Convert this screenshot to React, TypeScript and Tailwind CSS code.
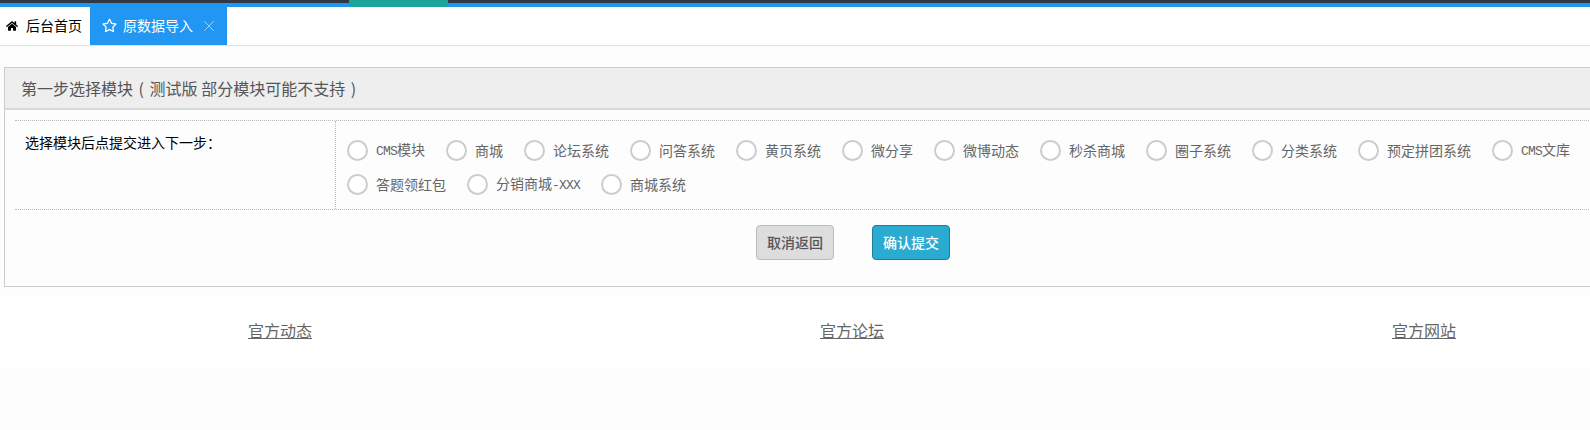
import React from "react";
import { FaHome, FaRegStar } from "react-icons/fa";
import { X } from "lucide-react";

const modules = [
  "CMS模块",
  "商城",
  "论坛系统",
  "问答系统",
  "黄页系统",
  "微分享",
  "微博动态",
  "秒杀商城",
  "圈子系统",
  "分类系统",
  "预定拼团系统",
  "CMS文库",
  "答题领红包",
  "分销商城-XXX",
  "商城系统",
];

const links = ["官方动态", "官方论坛", "官方网站"];

// latin runs are half-width in the original bitmap font
function ModuleLabel({ text }: { text: string }) {
  return (
    <span className="text-[14px] leading-[21px] text-[#666]">
      {text.split(/([A-Za-z-]+)/).map((part, i) =>
        /^[A-Za-z-]+$/.test(part) ? (
          <span key={i} className="font-['Liberation_Mono',monospace] text-[13px] tracking-[-0.8px]">
            {part}
          </span>
        ) : (
          <span key={i}>{part}</span>
        )
      )}
    </span>
  );
}

export default function App() {
  return (
    <div className="h-[430px] w-full overflow-hidden bg-[#fdfdfd] font-['Noto_Sans_CJK_SC','Liberation_Sans',sans-serif]">
      {/* Top bar */}
      <div className="relative h-[7px] bg-[#2196f3]">
        <div className="h-[3px] bg-[#2f3a45]" />
        <div className="absolute left-[349px] top-0 h-[7px] w-[99px] bg-[#1ba39c]" />
      </div>

      {/* Tabs */}
      <div className="flex h-[39px] border-b border-[#e0e0e0] bg-white">
        <div className="flex h-[38px] w-[90px] items-center pb-px pl-[6px] text-[14px] text-black">
          <FaHome className="mr-[8px] h-[12px] w-[12px]" />
          后台首页
        </div>
        <div className="flex h-[38px] w-[137px] items-center bg-[#2196f3] pb-px pl-[12px] text-[14px] text-white">
          <FaRegStar className="mr-[6px] h-[15px] w-[15px]" />
          原数据导入
          <X className="ml-[7px] h-[18px] w-[18px] text-[#a9d3f5]" strokeWidth={1.25} />
        </div>
      </div>

      {/* Panel */}
      <div className="ml-1 mt-[21px] w-[1697px] border border-[#ccc]">
        <div className="flex h-[42px] items-center whitespace-pre border-b-2 border-[#d8d8d8] bg-[#eee] pl-4 text-[16px] text-[#555]">
          第一步选择模块 <span className="mx-[2px]">(</span> 测试版 部分模块可能不支持 <span className="mx-[2px]">)</span>
        </div>
        <div className="pl-[10px] pr-[9px] pt-[10px]">
          <div className="flex h-[90px] border-y border-dotted border-[#bbb]">
            <div className="w-[321px] border-r border-dotted border-[#bbb] pl-[10px] pt-[11px] text-[14px] leading-[21px] text-black">
              选择模块后点提交进入下一步：
            </div>
            <div className="flex flex-1 flex-wrap content-start gap-x-[21px] gap-y-[13px] pl-[11px] pr-[40px] pt-[19px]">
              {modules.map((name) => (
                <label key={name} className="flex h-[21px] items-center gap-2">
                  <span className="h-[21px] w-[21px] rounded-full border-2 border-[#ccc] bg-white" />
                  <ModuleLabel text={name} />
                </label>
              ))}
            </div>
          </div>
          <div className="flex h-[76px] justify-center gap-[38px] pt-[15px]">
            <button className="h-[35px] w-[78px] rounded border border-[#bbb] bg-[#ddd] text-[14px] font-medium text-[#555]">
              取消返回
            </button>
            <button className="h-[35px] w-[78px] rounded border border-[#1b80a0] bg-[#2aabd2] text-[14px] font-medium text-white">
              确认提交
            </button>
          </div>
        </div>
      </div>

      {/* Footer links */}
      <div className="mt-[10px] -ml-[6px] grid h-[71px] w-[1716px] grid-cols-3 items-center bg-white pb-[6px]">
        {links.map((link) => (
          <a key={link} className="text-center text-[16px] text-[#666] underline">
            {link}
          </a>
        ))}
      </div>
    </div>
  );
}
